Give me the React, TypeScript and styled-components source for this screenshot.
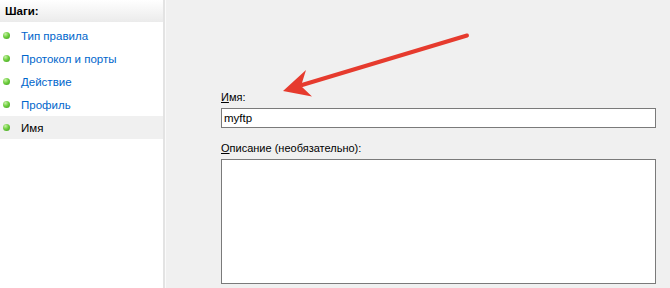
import React from 'react'
import styled, { createGlobalStyle } from 'styled-components'

const GlobalStyle = createGlobalStyle`
  html, body {
    margin: 0;
    padding: 0;
    background: #f0f0f0;
  }
  body {
    font-family: "Liberation Sans", Arial, sans-serif;
    font-size: 11px;
  }
`

const Window = styled.div`
  position: relative;
  display: flex;
  width: 670px;
  height: 288px;
  overflow: hidden;
  background: #f0f0f0;
`

const Sidebar = styled.div`
  width: 163px;
  flex: none;
  background: #ffffff;
  border-right: 2px solid #e3e3e3;
  display: flex;
  flex-direction: column;
`

const SidebarHeader = styled.div`
  height: 22px;
  line-height: 23px;
  padding-left: 5px;
  font-weight: bold;
  font-size: 11.5px;
  color: #000;
  background: linear-gradient(to bottom, #ffffff, #ebebeb);
  margin-bottom: 2px;
`

const Step = styled.div<{ $active?: boolean }>`
  height: 23px;
  display: flex;
  align-items: center;
  font-size: 11.5px;
  background: ${(p) => (p.$active ? '#f0f0f0' : 'transparent')};
  color: ${(p) => (p.$active ? '#000000' : '#0066cc')};
`

const Dot = styled.span`
  width: 7px;
  height: 7px;
  border-radius: 50%;
  margin-left: 3px;
  margin-right: 11px;
  background: radial-gradient(circle at 35% 30%, #c8f0a8 0%, #6fcf3f 45%, #3d9a1c 100%);
`

const Gap = styled.div`
  width: 1px;
  flex: none;
  background: #fafafa;
`

const Main = styled.div`
  flex: 1;
  padding: 90px 14px 0 55px;
  display: flex;
  flex-direction: column;
`

const Label = styled.div<{ $top?: number }>`
  line-height: 15px;
  color: #000;
  margin-top: ${(p) => p.$top ?? 0}px;
  margin-bottom: 3px;
  u {
    text-decoration: underline;
  }
`

const TextInput = styled.input`
  box-sizing: border-box;
  height: 20px;
  width: 100%;
  border: 1px solid #7a7a7a;
  background: #fff;
  padding: 0 2px;
  font: inherit;
  font-size: 11.5px;
  color: #000;
  outline: none;
`

const TextArea = styled.textarea`
  box-sizing: border-box;
  height: 125px;
  width: 100%;
  border: 1px solid #7a7a7a;
  background: #fff;
  resize: none;
  font: inherit;
  outline: none;
`

const ArrowLayer = styled.svg`
  position: absolute;
  left: 0;
  top: 0;
  pointer-events: none;
`

const steps = ['Тип правила', 'Протокол и порты', 'Действие', 'Профиль', 'Имя']

const App = () => {
  return (
    <Window>
      <GlobalStyle />
      <Sidebar>
        <SidebarHeader>Шаги:</SidebarHeader>
        {steps.map((s, i) => (
          <Step key={s} $active={i === steps.length - 1}>
            <Dot />
            {s}
          </Step>
        ))}
      </Sidebar>
      <Gap />
      <Main>
        <Label>
          <u>И</u>мя:
        </Label>
        <TextInput defaultValue="myftp" />
        <Label $top={13}>
          <u>О</u>писание (необязательно):
        </Label>
        <TextArea />
      </Main>
      <ArrowLayer width="670" height="288" viewBox="0 0 670 288">
        <line x1="467" y1="35.5" x2="302" y2="85" stroke="#e63b2e" strokeWidth="4" strokeLinecap="round" />
        <polygon points="283,91 306,70 301,86 312,96.5" fill="#e63b2e" />
      </ArrowLayer>
    </Window>
  )
}

export default App
